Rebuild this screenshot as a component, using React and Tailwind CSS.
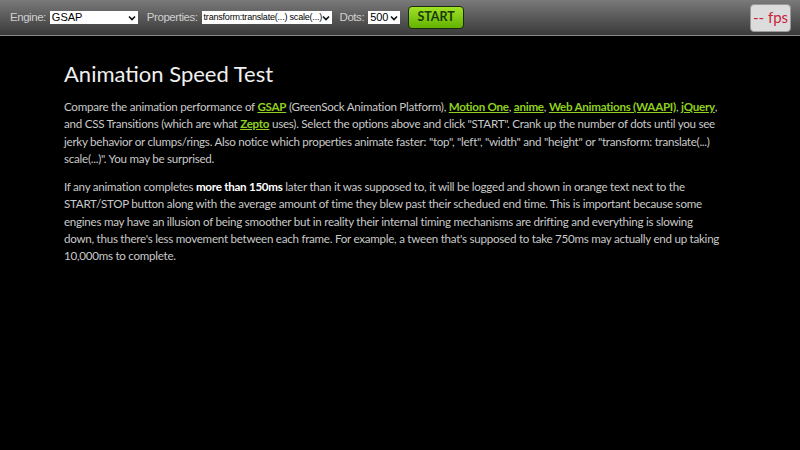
function Sel({ w, text, size = "text-[11px]" }) {
  return (
    <div className={`ml-[4px] flex h-[13px] items-center justify-between overflow-hidden bg-white pl-[2px] pr-[2px] leading-none text-black ${size} ${w}`}>
      <span className="whitespace-nowrap">{text}</span>
      <svg width="8" height="6" viewBox="0 0 8 6" className="shrink-0">
        <path d="M1 1.5 L4 4.5 L7 1.5" stroke="#111" strokeWidth="1.6" fill="none" />
      </svg>
    </div>
  );
}

export default function App() {
  const link = "text-[#8fd11f] font-bold underline";
  const label = "text-[11.5px] tracking-[-0.45px] text-[#d0d0d0]";
  return (
    <div className="min-h-[450px] w-full bg-black">
      <div className="flex h-[36px] items-center justify-between border-b border-[#888] bg-gradient-to-b from-[#7a7a7a] to-[#3a3a3a] pl-[10px] pr-[9px] font-['Liberation_Sans',sans-serif]">
        <div className="flex items-center">
          <span className={label}>Engine:</span>
          <Sel w="w-[88px]" text="GSAP" />
          <span className={`ml-[9px] ${label}`}>Properties:</span>
          <Sel w="w-[130px]" text="transform:translate(...) scale(...)" size="text-[9px] tracking-[-0.2px]" />
          <span className={`ml-[8px] ${label}`}>Dots:</span>
          <Sel w="w-[32px]" text="500" />
          <button className="ml-[8px] h-[23px] w-[56px] rounded-[4px] border border-[#1e2a10] bg-gradient-to-b from-[#9fe324] to-[#62b300] font-['Lato',sans-serif] text-[12.5px] font-bold text-[#1b3a06]">
            START
          </button>
        </div>
        <div className="flex h-[28px] w-[41px] items-center justify-center rounded-[4px] border border-[#999] bg-[#dcdcdc] font-['Lato',sans-serif] text-[15px] text-[#c8223a]">
          -- fps
        </div>
      </div>
      <div className="ml-[64px] w-[690px] pt-[23px] font-['Lato',sans-serif] text-[11.6px] leading-[17.3px] tracking-[-0.26px] text-[#c9c9c9]">
        <h1 className="text-[22px] leading-[30px] tracking-normal text-[#f0f0f0]">Animation Speed Test</h1>
        <p className="mt-[9px]">
          Compare the animation performance of <a className={link}>GSAP</a> (GreenSock Animation Platform),{" "}
          <a className={link}>Motion One</a>, <a className={link}>anime</a>,{" "}
          <a className={link}>Web Animations (WAAPI)</a>, <a className={link}>jQuery</a>,
          <br />
          and CSS Transitions (which are what <a className={link}>Zepto</a> uses). Select the options above and click
          "START". Crank up the number of dots until you see
          <br />
          jerky behavior or clumps/rings. Also notice which properties animate faster: "top", "left", "width" and
          "height" or "transform: translate(...)
          <br />
          scale(...)". You may be surprised.
        </p>
        <p className="mt-[11px]">
          If any animation completes <b className="text-white">more than 150ms</b> later than it was supposed to, it
          will be logged and shown in orange text next to the
          <br />
          START/STOP button along with the average amount of time they blew past their schedued end time. This is
          important because some
          <br />
          engines may have an illusion of being smoother but in reality their internal timing mechanisms are drifting
          and everything is slowing
          <br />
          down, thus there's less movement between each frame. For example, a tween that's supposed to take 750ms may
          actually end up taking
          <br />
          10,000ms to complete.
        </p>
      </div>
    </div>
  );
}
